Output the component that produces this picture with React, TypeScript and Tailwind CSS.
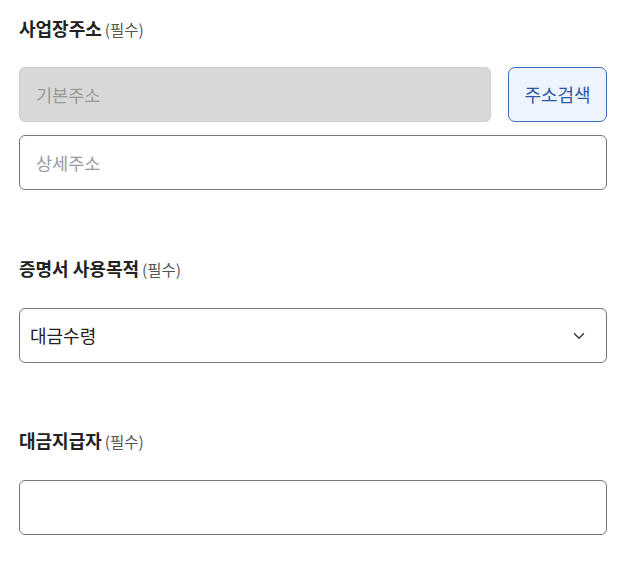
import { ChevronDown } from "lucide-react";

const Label = ({ title }: { title: string }) => (
  <div className="flex items-baseline gap-[3px] h-6 leading-6">
    <span className="text-[18px] font-bold text-[#222]">{title}</span>
    <span className="text-[15.5px] text-[#555]">(필수)</span>
  </div>
);

const App = () => {
  return (
    <div
      className="bg-white w-[622px] h-[564px] pl-[19px] pr-[15px] pt-[16px]"
      style={{ fontFamily: '"Noto Sans CJK KR", "Noto Sans", sans-serif' }}
    >
      <Label title="사업장주소" />
      <div className="mt-[27px] flex gap-[17px]">
        <input
          disabled
          placeholder="기본주소"
          className="flex-1 h-[55px] rounded-md border border-[#cfcfcf] bg-[#d8d8d8] px-[16px] text-[17.5px] placeholder:text-[#9a9a9a]"
        />
        <button className="w-[99px] h-[55px] rounded-[7px] border border-[#3c6cc0] bg-[#eef4fe] text-[18px] text-[#2d56a3]">
          주소검색
        </button>
      </div>
      <input
        placeholder="상세주소"
        className="mt-[13px] w-full h-[55px] rounded-md border border-[#777] bg-white px-[16px] text-[17.5px] placeholder:text-[#9a9a9a] outline-none"
      />

      <div className="mt-[66px]">
        <Label title="증명서 사용목적" />
      </div>
      <div className="mt-[28px] flex items-center justify-between w-full h-[55px] rounded-md border border-[#777] bg-white pl-[10px] pr-[18px]">
        <span className="text-[18px] text-[#222]">대금수령</span>
        <ChevronDown size={18} strokeWidth={1.8} className="text-[#333]" />
      </div>

      <div className="mt-[65px]">
        <Label title="대금지급자" />
      </div>
      <input className="mt-[28px] w-full h-[55px] rounded-md border border-[#777] bg-white px-[16px] text-[17.5px] outline-none" />
    </div>
  );
};

export default App;
